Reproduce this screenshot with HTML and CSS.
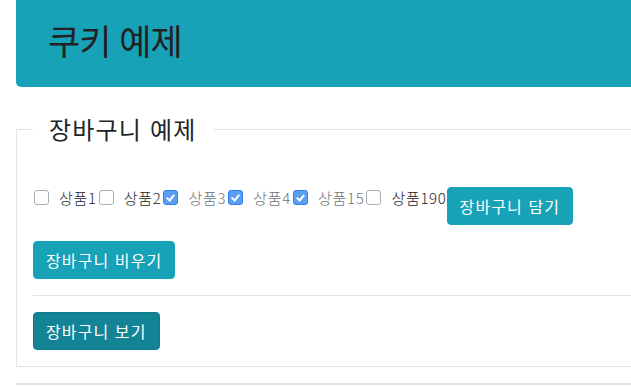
FILE: index.html
```html
<!DOCTYPE html>
<html lang="ko">
<head>
  <meta charset="UTF-8" />
  <meta name="viewport" content="width=device-width, initial-scale=1.0"/>
  <title>쿠키 예제</title>
  <link rel="stylesheet" href="styles.css">
</head>
<body>

  <div class="page">
    <!-- Header -->
    <div class="jumbotron">
      <h1>쿠키 예제</h1>
    </div>

    <!-- Cart -->
    <fieldset class="cart">
      <legend>장바구니 예제</legend>

      <div class="item-row">
        <div class="items">
          <label class="item"><input type="checkbox" /><span>상품1</span></label>
          <label class="item"><input type="checkbox" /><span>상품2</span></label>
          <label class="item"><input type="checkbox" checked /><span>상품3</span></label>
          <label class="item"><input type="checkbox" checked /><span>상품4</span></label>
          <label class="item"><input type="checkbox" checked /><span>상품15</span></label>
          <label class="item"><input type="checkbox" /><span>상품190</span></label>
        </div>
        <button type="button" class="btn">장바구니 담기</button>
      </div>

      <div class="btn-row">
        <button type="button" class="btn">장바구니 비우기</button>
      </div>

      <hr class="divider" />

      <div class="btn-row last">
        <button type="button" class="btn active">장바구니 보기</button>
      </div>
    </fieldset>

    <hr class="footer-line" />
  </div>

</body>
</html>
```

FILE: styles.css
```css
* {
  box-sizing: border-box;
}

html, body {
  overflow: hidden;
}

body {
  margin: 0;
  background-color: #fff;
  color: #212529;
  font-family: "Noto Sans CJK KR", "Noto Sans", sans-serif;
  font-size: 16px;
}

.page {
  width: 760px;
  padding-left: 16px;
}

.jumbotron {
  background-color: #17a2b8;
  border-radius: 0 0 5px 5px;
  padding: 19px 32px 27px;
}

.jumbotron h1 {
  margin: 0;
  font-size: 35px;
  font-weight: 400;
  line-height: 41px;
  letter-spacing: -1px;
  color: #222;
}

.cart {
  margin: 24px 0 0;
  border: 1px solid #dfe1e4;
  padding: 40px 16px 16px;
}

.cart legend {
  padding: 0 17px 0 16px;
  font-size: 24px;
  line-height: 36px;
  font-weight: 400;
  letter-spacing: 1.2px;
}

.item-row {
  display: flex;
  align-items: flex-start;
}

.items {
  display: flex;
  align-items: flex-start;
  font-size: 15px;
  line-height: 21px;
  letter-spacing: 0.7px;
}

.item {
  display: flex;
  align-items: flex-start;
}

.item span {
  font-weight: 300;
}

.item input {
  appearance: none;
  -webkit-appearance: none;
  position: relative;
  width: 15px;
  height: 15px;
  margin: 3px 10px 0 2px;
  border: 1px solid #a9b0b8;
  border-radius: 3px;
  background-color: #fff;
}

.item:first-child input {
  margin-left: 1px;
}

.item input:checked {
  background-color: #5c9df5;
  border-color: #2f7fe6;
}

.item input:checked::after {
  content: "";
  position: absolute;
  left: 4px;
  top: 2px;
  width: 3px;
  height: 6px;
  border: solid #fff;
  border-width: 0 2px 2px 0;
  transform: rotate(40deg);
}

.item input:checked + span {
  color: #6f7378;
}

.btn {
  cursor: pointer;
  font-family: inherit;
  font-size: 16px;
  line-height: 24px;
  letter-spacing: 1.1px;
  padding: 6px 12px;
  color: #fff;
  background-color: #17a2b8;
  border: 1px solid #17a2b8;
  border-radius: 4px;
}

.btn.active {
  background-color: #138496;
  border-color: #117a8b;
}

.btn-row {
  margin-top: 16px;
}

.divider {
  margin: 16px 0;
  border: 0;
  border-top: 1px solid #e2e3e5;
}

.btn-row.last {
  margin-top: 0;
}

.footer-line {
  margin: 16px 0 0;
  border: 0;
  border-top: 2px solid #e4e4e4;
}
```
